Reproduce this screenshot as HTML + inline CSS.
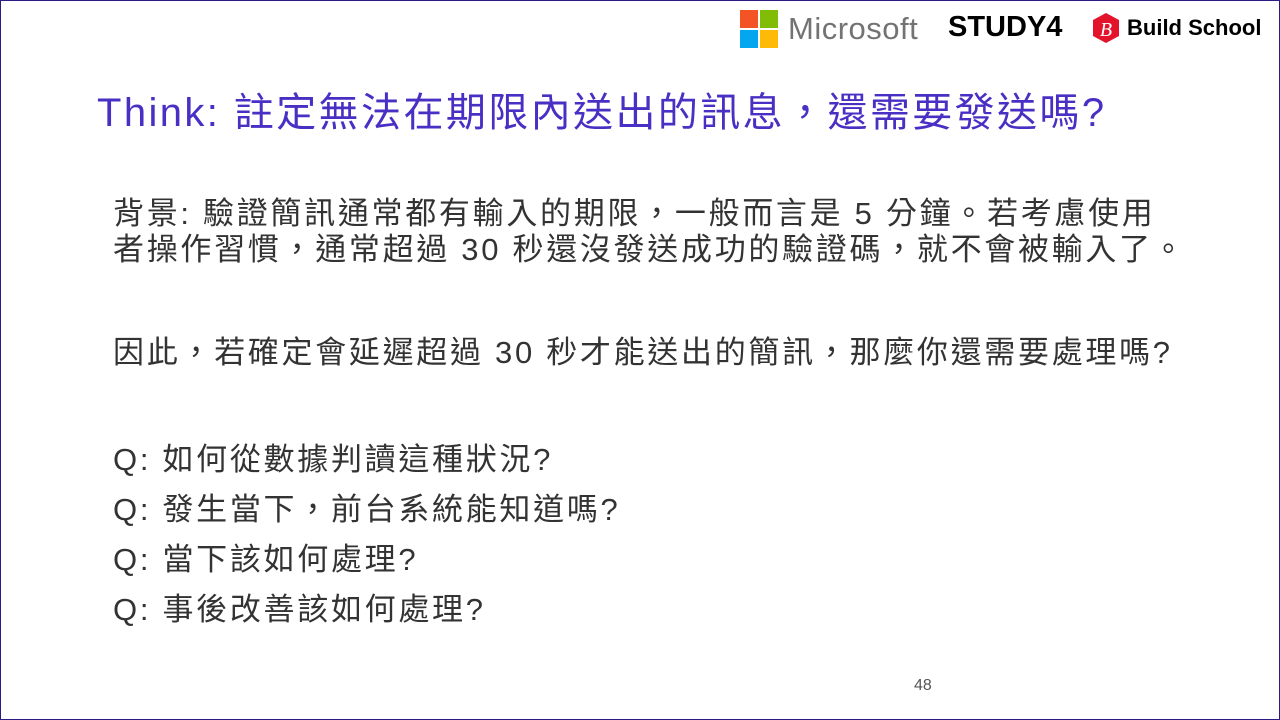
<!DOCTYPE html>
<html><head><meta charset="utf-8"><style>
body{margin:0;width:1280px;height:720px;overflow:hidden;background:#fff;font-family:"Liberation Sans","Noto Sans CJK TC",sans-serif;}
.f{position:absolute;left:0;top:0;width:1278px;height:718px;border:1px solid #2e1a87;}
.t{position:absolute;white-space:nowrap;}
.title{left:97px;top:80px;font-size:40px;color:#4a2fc4;letter-spacing:2.4px;}
.b{left:113px;font-size:31px;color:#333;line-height:36px;letter-spacing:2.7px;}
</style></head><body>
<div class="f"></div>
<svg class="t" style="left:740px;top:10px" width="38" height="38"><rect x="0" y="0" width="18" height="18" fill="#f35325"/><rect x="20" y="0" width="18" height="18" fill="#81bc06"/><rect x="0" y="20" width="18" height="18" fill="#05a6f0"/><rect x="20" y="20" width="18" height="18" fill="#ffba08"/></svg>
<div class="t" style="left:788px;top:11px;font-size:31px;color:#737373;letter-spacing:0.5px;">Microsoft</div>
<div class="t" style="left:948px;top:11px;font-size:29px;font-weight:bold;color:#000;">STUDY4</div>
<svg class="t" style="left:1090px;top:12px" width="32" height="32"><polygon points="16,1 29,8 29,24 16,31 3,24 3,8" fill="#e3132c"/><text x="16" y="24" font-size="20" font-style="italic" font-family="Liberation Serif" fill="#fff" text-anchor="middle">B</text></svg>
<div class="t" style="left:1127px;top:15px;font-size:22px;font-weight:bold;color:#000;">Build School</div>
<div class="t title">Think: 註定無法在期限內送出的訊息，還需要發送嗎?</div>
<div class="t b" style="top:196px">背景: 驗證簡訊通常都有輸入的期限，一般而言是 5 分鐘。若考慮使用<br>者操作習慣，通常超過 30 秒還沒發送成功的驗證碼，就不會被輸入了。</div>
<div class="t b" style="top:335px">因此，若確定會延遲超過 30 秒才能送出的簡訊，那麼你還需要處理嗎?</div>
<div class="t b" style="top:435px;line-height:50px">Q: 如何從數據判讀這種狀況?<br>Q: 發生當下，前台系統能知道嗎?<br>Q: 當下該如何處理?<br>Q: 事後改善該如何處理?</div>
<div class="t" style="left:914px;top:677px;font-size:16px;color:#555;">48</div>
</body></html>
